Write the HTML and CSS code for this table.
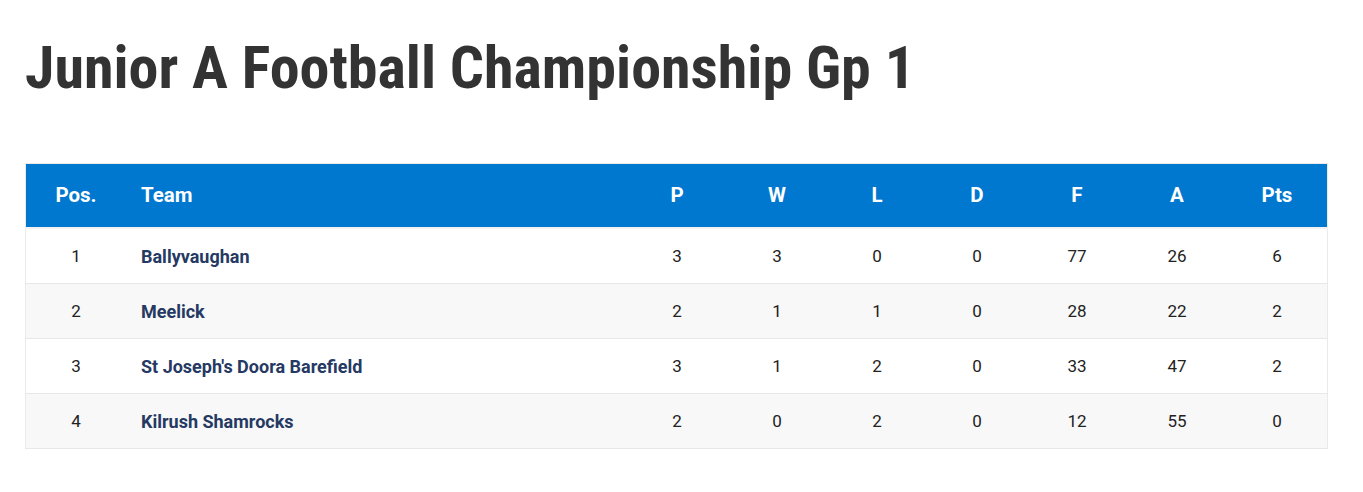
FILE: index.html
```html
<!DOCTYPE html>
<html lang="en">
<head>
  <meta charset="UTF-8">
  <title>Junior A Football Championship Gp 1</title>
  <link rel="stylesheet" href="styles.css">
</head>
<body>
  <h1 class="page-title">Junior A Football Championship Gp 1</h1>
  <table class="league-table">
    <thead>
      <tr>
        <th class="pos">Pos.</th>
        <th class="team">Team</th>
        <th>P</th>
        <th>W</th>
        <th>L</th>
        <th>D</th>
        <th>F</th>
        <th>A</th>
        <th>Pts</th>
      </tr>
    </thead>
    <tbody>
      <tr>
        <td class="pos">1</td>
        <td class="team">Ballyvaughan</td>
        <td>3</td><td>3</td><td>0</td><td>0</td><td>77</td><td>26</td><td>6</td>
      </tr>
      <tr>
        <td class="pos">2</td>
        <td class="team">Meelick</td>
        <td>2</td><td>1</td><td>1</td><td>0</td><td>28</td><td>22</td><td>2</td>
      </tr>
      <tr>
        <td class="pos">3</td>
        <td class="team">St Joseph's Doora Barefield</td>
        <td>3</td><td>1</td><td>2</td><td>0</td><td>33</td><td>47</td><td>2</td>
      </tr>
      <tr>
        <td class="pos">4</td>
        <td class="team">Kilrush Shamrocks</td>
        <td>2</td><td>0</td><td>2</td><td>0</td><td>12</td><td>55</td><td>0</td>
      </tr>
    </tbody>
  </table>
</body>
</html>
```

FILE: styles.css
```css
body {
  font-family: Roboto, sans-serif;
  margin: 0;
  padding: 0 35px 0 25px;
  background: #fff;
  color: #222;
}
.page-title {
  font-family: "Roboto Condensed", "Liberation Sans Narrow", Roboto, sans-serif;
  font-stretch: condensed;
  font-size: 60px;
  font-weight: 700;
  color: #333;
  margin: 32px 0 59px;
  line-height: 1.2;
}
.league-table {
  width: 1303px;
  border-collapse: collapse;
  border: 1px solid #eaeaea;
  font-size: 17px;
}
.league-table th {
  background: #0078cf;
  color: #fff;
  font-weight: 700;
  font-size: 20.5px;
  height: 61px;
  padding: 0 0 2px;
  text-align: center;
  width: 100px;
  border-bottom: 2px solid #f2f2f2;
}
.league-table td {
  height: 54px;
  padding: 0;
  text-align: center;
  border-bottom: 1px solid #e8e8e8;
}
.league-table tbody tr:nth-child(even) {
  background: #f8f8f8;
}
.league-table .team {
  text-align: left;
  padding-left: 15px;
  width: auto;
}
.league-table td.team {
  font-size: 18px;
  font-weight: 700;
  color: #253963;
}
```
